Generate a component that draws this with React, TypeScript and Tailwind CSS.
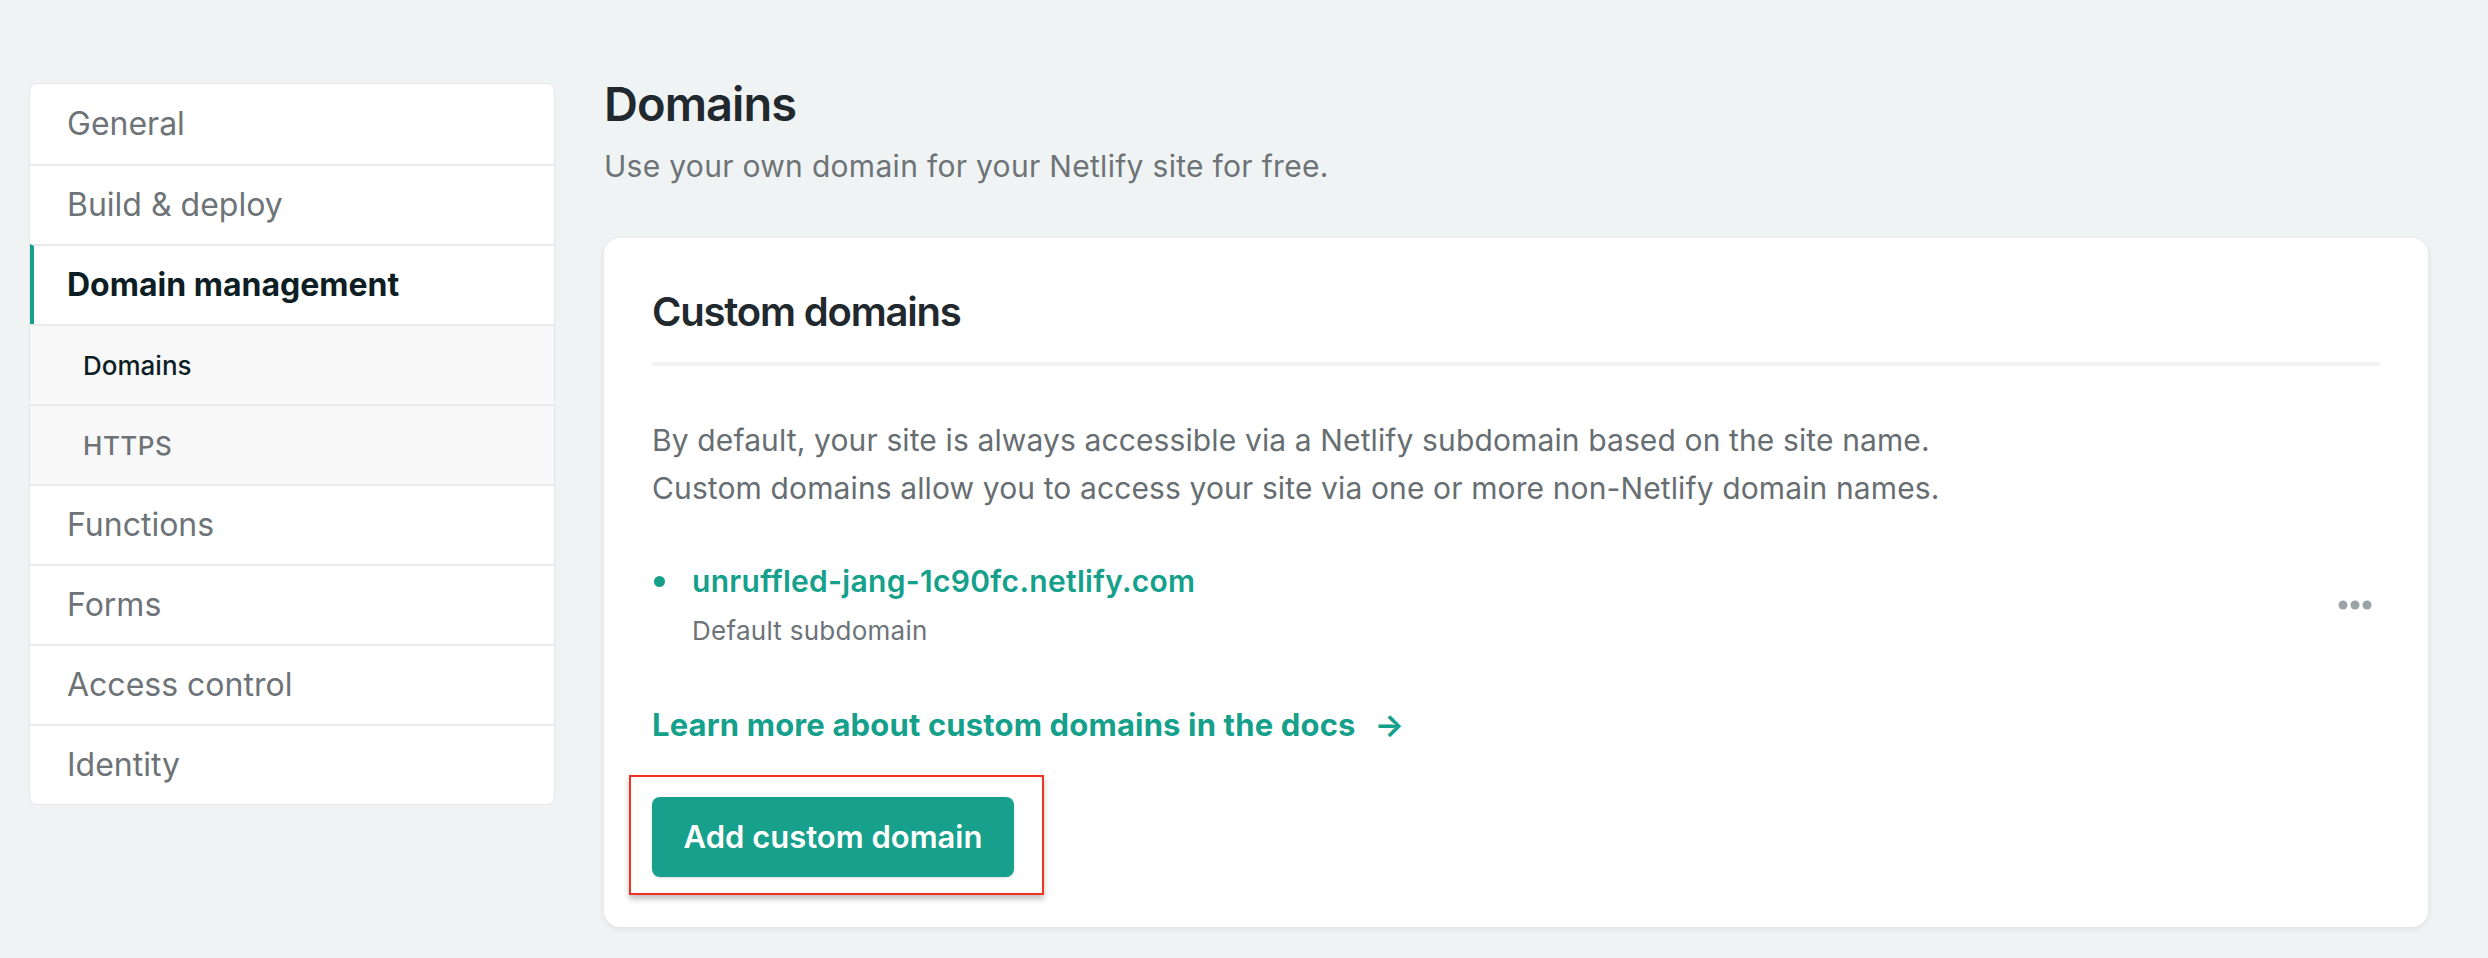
const navItems = [
  { label: "General" },
  { label: "Build & deploy" },
  { label: "Domain management", active: true },
  { label: "Domains", sub: true, current: true },
  { label: "HTTPS", sub: true },
  { label: "Functions" },
  { label: "Forms" },
  { label: "Access control" },
  { label: "Identity" },
];

const Sidebar = () => {
  return (
    <nav className="w-[526px] shrink-0 bg-white border border-[#e3e6e6] rounded-[8px] overflow-hidden">
      {navItems.map((item, i) => {
        let cls = "h-[80px] flex items-center ";
        if (i > 0) cls += "border-t-2 border-[#e9ebeb] ";
        if (item.sub) {
          cls += "bg-[#f8f8f8] pl-[53px] text-[26px] font-medium ";
          cls += item.current ? "text-[#0e1e25]" : "text-[#6d7377] tracking-[0.02em]";
        } else if (item.active) {
          cls += "border-l-4 border-l-[#15a08b] pl-[33px] text-[32px] font-bold text-[#0e1e25]";
        } else {
          cls += "pl-[37px] text-[32px] text-[#6d7377]";
        }
        return (
          <div key={item.label} className={cls}>
            {item.label}
          </div>
        );
      })}
    </nav>
  );
};

// three filled dots, the row's menu trigger
const MoreDots = () => (
  <svg width="34" height="10" viewBox="0 0 34 10" className="mr-[8px]">
    <circle cx="5" cy="5" r="4.5" fill="#9ca3a6" />
    <circle cx="17" cy="5" r="4.5" fill="#9ca3a6" />
    <circle cx="29" cy="5" r="4.5" fill="#9ca3a6" />
  </svg>
);

const App = () => {
  return (
    <div
      className="min-h-screen bg-[#f0f3f3] flex items-start gap-[49px] pl-[29px] pr-[60px] pt-[83px] pb-[30px]"
      style={{ fontFamily: "Inter, 'Noto Sans', sans-serif" }}
    >
      <Sidebar />

      <main className="flex-1 min-w-0">
        <h1 className="text-[47px] leading-[42px] font-semibold text-[#21292e] tracking-[-0.02em]">
          Domains
        </h1>
        <p className="mt-[21px] text-[30px] leading-[40px] text-[#6d7377] tracking-[0.01em]">
          Use your own domain for your Netlify site for free.
        </p>

        <section className="mt-[52px] bg-white rounded-[16px] shadow-[0_2px_6px_rgba(0,0,0,0.08)] px-[48px] pt-[50px] pb-[50px]">
          <h2 className="text-[40px] leading-[48px] font-semibold text-[#21292e] tracking-[-0.03em]">
            Custom domains
          </h2>
          <div className="mt-[26px] h-[4px] bg-[#eef2f2]" />

          <p className="mt-[50px] text-[30px] leading-[48px] text-[#676e72] tracking-[0.004em]">
            By default, your site is always accessible via a Netlify subdomain based on the site name.
            <br />
            Custom domains allow you to access your site via one or more non-Netlify domain names.
          </p>

          <div className="mt-[49px] flex items-center justify-between">
            <div>
              <div className="flex items-center">
                <span className="ml-[2px] w-[11px] h-[11px] rounded-full bg-[#15a08b]" />
                <span className="ml-[27px] text-[30px] leading-[40px] font-semibold text-[#15a08b] tracking-[0.01em]">
                  unruffled-jang-1c90fc.netlify.com
                </span>
              </div>
              <div className="mt-[13px] ml-[40px] text-[26px] leading-[34px] text-[#6d7377] tracking-[0.01em]">
                Default subdomain
              </div>
            </div>
            <MoreDots />
          </div>

          <a className="mt-[57px] flex items-center gap-[19px] text-[31px] leading-[40px] font-bold text-[#15a08b] tracking-[0.005em]">
            Learn more about custom domains in the docs
            <span>→</span>
          </a>

          <div className="relative mt-[52px] w-fit">
            <button className="h-[80px] w-[362px] rounded-[8px] bg-[#17a08b] text-white text-[31px] font-semibold shadow-[0_1px_3px_rgba(0,0,0,0.15)]">
              Add custom domain
            </button>
            <div className="absolute left-[-23px] right-[-30px] top-[-22px] bottom-[-18px] border-2 border-[#ee3322] shadow-[0_4px_6px_rgba(0,0,0,0.25)] pointer-events-none" />
          </div>
        </section>
      </main>
    </div>
  );
};

export default App;
